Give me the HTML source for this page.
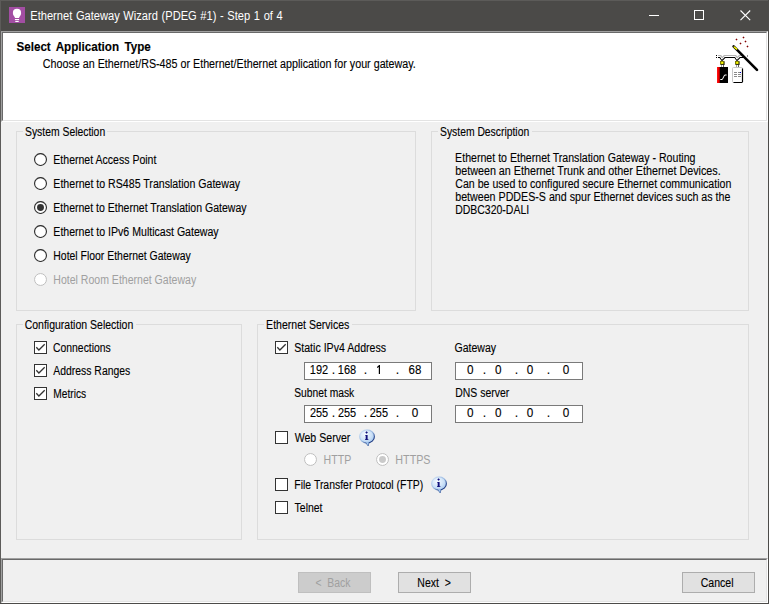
<!DOCTYPE html>
<html><head><meta charset="utf-8"><title>Ethernet Gateway Wizard</title>
<style>
html,body{margin:0;padding:0}
body{width:769px;height:604px;overflow:hidden;position:relative;background:#f0f0f0;font-family:"Liberation Sans",sans-serif;font-size:11px;color:#000}
div,span,svg{position:absolute;box-sizing:border-box}
.t{white-space:pre;font-size:12.3px;line-height:14px;transform-origin:0 0;color:#000;-webkit-text-stroke:0.12px currentColor}
#title{left:0;top:0;width:769px;height:31px;background:#4b4a48}
#bl{left:0;top:0;width:1px;height:604px;background:#5c5b59}
#br{left:768px;top:0;width:1px;height:604px;background:#4c4b49}
#bb{left:0;top:603px;width:769px;height:1px;background:#4c4b49}
#bt{left:0;top:0;width:769px;height:1px;background:#5c5b59}
.sunk{border:1px solid;border-color:#a0a0a0 #ffffff #ffffff #a0a0a0}
.sunk>i{position:absolute;left:0;top:0;right:0;bottom:0;border:1px solid;border-color:#696969 #e3e3e3 #e3e3e3 #696969}
#hdr{left:1px;top:31px;width:767px;height:91px}
#hdr>i{background:#fff}
#ftr{left:1px;top:558px;width:767px;height:45px}
#ftr>i{background:#f0f0f0}
.gb{border:1px solid #dcdcdc}
.gl{background:#f0f0f0;height:3px}
.cb{width:13px;height:13px;border:1px solid #333;background:#fff}
.rb{width:13px;height:13px;border:1px solid #333;background:#fff;border-radius:50%}
.rb.on::after{content:"";position:absolute;left:2px;top:2px;width:7px;height:7px;border-radius:50%;background:#333}
.rb.dis{border-color:#bfbfbf;background:#fff}
.rb.dis.on::after{background:#cacaca}
.ip{width:128px;height:18px;border:1px solid #7a7a7a;background:#fff}
.btn{width:73px;height:21px;border:1px solid #adadad;background:#e1e1e1}
.btn.dis{border-color:#bfbfbf;background:#cccccc}

</style></head>
<body>
<div id="title"></div>
<!-- app icon -->
<svg style="left:9px;top:7px" width="16" height="16" viewBox="0 0 16 16">
<rect width="16" height="16" fill="#a24ea3"/>
<circle cx="8" cy="5.9" r="4.1" fill="#fff"/>
<path d="M4.9 8.2 L11.1 8.2 L10 11.1 L6 11.1 Z" fill="#fff"/>
<rect x="5.9" y="12" width="4.2" height="1.1" fill="#fff"/>
<rect x="6.3" y="13.9" width="3.4" height="1.1" fill="#fff"/>
</svg>
<!-- caption buttons -->
<svg style="left:640px;top:0" width="128" height="31" viewBox="640 0 128 31" shape-rendering="crispEdges">
<rect x="649" y="15" width="10" height="1" fill="#fff"/>
<rect x="694.5" y="10.5" width="9" height="9" fill="none" stroke="#fff" stroke-width="1"/>
<path d="M740.5 10.5 L750.2 20.2 M750.2 10.5 L740.5 20.2" stroke="#fff" stroke-width="1.1" fill="none" shape-rendering="geometricPrecision"/>
</svg>
<div id="hdr" class="sunk"><i></i></div>
<div id="ftr" class="sunk"><i></i></div>
<!-- group boxes -->
<div class="gb" style="left:16px;top:131px;width:400px;height:180px"></div>
<div class="gl" style="left:23px;top:130px;width:84px"></div>
<div class="gb" style="left:431px;top:131px;width:318px;height:180px"></div>
<div class="gl" style="left:438px;top:130px;width:94px"></div>
<div class="gb" style="left:16px;top:324px;width:226px;height:216px"></div>
<div class="gl" style="left:23px;top:323px;width:113px"></div>
<div class="gb" style="left:257px;top:324px;width:492px;height:216px"></div>
<div class="gl" style="left:264px;top:323px;width:88px"></div>
<!-- radios -->
<svg style="left:34px;top:153px" width="13" height="13" viewBox="0 0 13 13"><circle cx="6.5" cy="6.5" r="5.95" fill="#fff" stroke="#333" stroke-width="1.15"/></svg>
<svg style="left:34px;top:177px" width="13" height="13" viewBox="0 0 13 13"><circle cx="6.5" cy="6.5" r="5.95" fill="#fff" stroke="#333" stroke-width="1.15"/></svg>
<svg style="left:34px;top:201px" width="13" height="13" viewBox="0 0 13 13"><circle cx="6.5" cy="6.5" r="5.95" fill="#fff" stroke="#333" stroke-width="1.15"/><circle cx="6.5" cy="6.5" r="3.45" fill="#333"/></svg>
<svg style="left:34px;top:225px" width="13" height="13" viewBox="0 0 13 13"><circle cx="6.5" cy="6.5" r="5.95" fill="#fff" stroke="#333" stroke-width="1.15"/></svg>
<svg style="left:34px;top:249px" width="13" height="13" viewBox="0 0 13 13"><circle cx="6.5" cy="6.5" r="5.95" fill="#fff" stroke="#333" stroke-width="1.15"/></svg>
<svg style="left:34px;top:273px" width="13" height="13" viewBox="0 0 13 13"><circle cx="6.5" cy="6.5" r="5.95" fill="#fff" stroke="#bfbfbf" stroke-width="1"/></svg>
<!-- checkboxes -->
<div class="cb" style="left:34px;top:341px"><svg width="11" height="11" viewBox="1 1 11 11" style="left:0;top:0"><path d="M2.3 6.3 L4.9 9 L10.7 3.3" fill="none" stroke="#333" stroke-width="1.3"/></svg></div>
<div class="cb" style="left:34px;top:364px"><svg width="11" height="11" viewBox="1 1 11 11" style="left:0;top:0"><path d="M2.3 6.3 L4.9 9 L10.7 3.3" fill="none" stroke="#333" stroke-width="1.3"/></svg></div>
<div class="cb" style="left:34px;top:387px"><svg width="11" height="11" viewBox="1 1 11 11" style="left:0;top:0"><path d="M2.3 6.3 L4.9 9 L10.7 3.3" fill="none" stroke="#333" stroke-width="1.3"/></svg></div>
<div class="cb" style="left:275px;top:341px"><svg width="11" height="11" viewBox="1 1 11 11" style="left:0;top:0"><path d="M2.3 6.3 L4.9 9 L10.7 3.3" fill="none" stroke="#333" stroke-width="1.3"/></svg></div>
<div class="cb" style="left:275px;top:431px"></div>
<div class="cb" style="left:275px;top:478px"></div>
<div class="cb" style="left:275px;top:501px"></div>
<!-- ip boxes -->
<div class="ip" style="left:304px;top:362px"></div>
<div class="ip" style="left:304px;top:405px"></div>
<div class="ip" style="left:455px;top:362px"></div>
<div class="ip" style="left:455px;top:405px"></div>
<!-- disabled radios -->
<svg style="left:304px;top:453px" width="13" height="13" viewBox="0 0 13 13"><circle cx="6.5" cy="6.5" r="5.95" fill="#fff" stroke="#bfbfbf" stroke-width="1"/></svg>
<svg style="left:376px;top:453px" width="13" height="13" viewBox="0 0 13 13"><circle cx="6.5" cy="6.5" r="5.95" fill="#fff" stroke="#bfbfbf" stroke-width="1"/><circle cx="6.5" cy="6.5" r="3.45" fill="#cacaca"/></svg>
<!-- buttons -->
<div class="btn dis" style="left:298px;top:572px"></div>
<div class="btn" style="left:398px;top:572px"></div>
<div class="btn" style="left:682px;top:572px"></div>
<div id="bt"></div><div id="bl"></div><div id="br"></div><div id="bb"></div>
<!-- wizard icon -->
<svg style="left:712px;top:32px" width="50" height="54" viewBox="712 32 50 54">
<g shape-rendering="crispEdges">
<g fill="#800000"><rect x="736" y="39" width="1" height="1"/><rect x="743" y="37" width="1" height="1"/><rect x="745" y="41" width="1" height="1"/><rect x="740" y="43" width="1" height="1"/><rect x="747" y="46" width="1" height="1"/></g>
<g fill="#800000" opacity="0.3"><path d="M735 39h3v1h-3zM736 38h1v3h-1zM742 37h3v1h-3zM743 36h1v3h-1zM744 41h3v1h-3zM745 40h1v3h-1zM739 43h3v1h-3zM740 42h1v3h-1zM746 46h3v1h-3zM747 45h1v3h-1z"/></g>
<!-- cable -->
<rect x="716" y="55" width="1" height="1" fill="#000"/><rect x="716" y="57" width="1" height="1" fill="#000"/>
<rect x="747" y="55" width="1" height="2" fill="#909090"/>
</g>
<g fill="none" stroke-linejoin="miter" stroke-linecap="butt">
<path d="M718 56.5 H720.3 L722 59.3 L724.6 56.5 H735.3 L737 59.3 L739.6 56.5 H744" stroke="#b4b4b4" stroke-width="3"/>
<path d="M718 57.5 H720 L722 60.3 L724.9 57.5 H735 L737 60.3 L739.9 57.5 H744" stroke="#000" stroke-width="1.1"/>
<path d="M718 56.5 H720.3 L722 59.3 L724.6 56.5 H735.3 L737 59.3 L739.6 56.5 H744" stroke="#fff" stroke-width="1"/>
<path d="M721.5 59.5 V61 M722.6 59.5 V61 M736.5 59.5 V61 M737.6 59.5 V61" stroke="#444" stroke-width="0.6"/>
</g>
<rect x="720" y="61" width="4.4" height="3.6" fill="#7c7c00"/><rect x="720.6" y="64" width="3.8" height="0.7" fill="#000"/><rect x="723.8" y="61.4" width="0.6" height="3.2" fill="#000"/><rect x="721.2" y="61.9" width="2" height="1.9" fill="#ffff00"/>
<rect x="735" y="61" width="4.4" height="3.6" fill="#7c7c00"/><rect x="735.6" y="64" width="3.8" height="0.7" fill="#000"/><rect x="738.8" y="61.4" width="0.6" height="3.2" fill="#000"/><rect x="736.2" y="61.9" width="2" height="1.9" fill="#ffff00"/>
<g shape-rendering="crispEdges">
<rect x="721" y="65" width="1" height="2" fill="#a0a0a0"/><rect x="723" y="65" width="1" height="2" fill="#606060"/>
<rect x="736" y="65" width="1" height="2" fill="#a0a0a0"/><rect x="738" y="65" width="1" height="2" fill="#606060"/>
<rect x="717" y="67" width="11" height="16" fill="#000"/>
<rect x="717" y="67" width="1" height="16" fill="#ff1010"/><rect x="718" y="67" width="1" height="16" fill="#f00000"/><rect x="719" y="67" width="1" height="16" fill="#a00000"/>
</g>
<rect x="732.5" y="67.5" width="10" height="15" rx="1" fill="#fff" stroke="#c8c8c8" stroke-width="1"/>
<path d="M742.5 68.5 V82 M733.5 82.5 H742.5" stroke="#000" stroke-width="1.2" fill="none"/>
<g shape-rendering="crispEdges" fill="#8a8a8a"><rect x="734" y="72" width="3" height="1"/><rect x="738" y="72" width="2" height="1"/><rect x="734" y="74" width="3" height="1"/><rect x="738" y="74" width="3" height="1"/><rect x="734" y="76" width="3" height="1"/><rect x="738" y="76" width="3" height="1"/>
<rect x="740" y="72" width="1" height="1" fill="#0000c0"/></g>
<path d="M720.3 79.5 H722.3 L724.6 75 H726.6" fill="none" stroke="#fff" stroke-width="1"/>
<path d="M733.6 46.4 L757 69.8" stroke="#000" stroke-width="2.6" stroke-linecap="round" fill="none"/>
<path d="M734.2 47 L736.7 49.1" stroke="#ffff00" stroke-width="1.4" stroke-linecap="round" fill="none"/>
</svg>
<!-- info icons -->
<svg width="0" height="0" style="left:0;top:0"><defs>
<radialGradient id="ig" cx="0.38" cy="0.35" r="0.75"><stop offset="0" stop-color="#f4faff"/><stop offset="0.55" stop-color="#cfe3f8"/><stop offset="1" stop-color="#9fc4ee"/></radialGradient>
<linearGradient id="is" x1="0" y1="0" x2="1" y2="1"><stop offset="0" stop-color="#dce9f8"/><stop offset="0.5" stop-color="#9dbbe2"/><stop offset="0.8" stop-color="#2a468c"/><stop offset="1" stop-color="#16306e"/></linearGradient>
</defs></svg>
<svg style="left:358px;top:428px" width="18" height="20" viewBox="0 0 18 20">
<path d="M7.2 14.0 L10.2 17.9 L11.2 13.6 Z" fill="#8fbbea" stroke="#2c4c92" stroke-width="0.7"/>
<ellipse cx="9" cy="8.5" rx="7.4" ry="6.6" fill="url(#ig)" stroke="url(#is)" stroke-width="1.2"/>
<path d="M7.8 14.4 L10.1 16.9 L10.7 14.0 Z" fill="#a9cdf2"/>
<path d="M8.6 3.2 L9.9 4.5 L8.6 5.8 L7.3 4.5 Z" fill="#10107c"/>
<path d="M7.2 6.9 H9.6 V11.3 H10.4 V12.1 H7.0 V11.3 H7.7 V7.7 H7.2 Z" fill="#10107c"/>
</svg>
<svg style="left:430px;top:475px" width="18" height="20" viewBox="0 0 18 20">
<path d="M7.2 14.0 L10.2 17.9 L11.2 13.6 Z" fill="#8fbbea" stroke="#2c4c92" stroke-width="0.7"/>
<ellipse cx="9" cy="8.5" rx="7.4" ry="6.6" fill="url(#ig)" stroke="url(#is)" stroke-width="1.2"/>
<path d="M7.8 14.4 L10.1 16.9 L10.7 14.0 Z" fill="#a9cdf2"/>
<path d="M8.6 3.2 L9.9 4.5 L8.6 5.8 L7.3 4.5 Z" fill="#10107c"/>
<path d="M7.2 6.9 H9.6 V11.3 H10.4 V12.1 H7.0 V11.3 H7.7 V7.7 H7.2 Z" fill="#10107c"/>
</svg>
<!-- digit 1 in IP field (drawn, no foot serif) -->
<svg style="left:375px;top:363px" width="8" height="13" viewBox="375 363 8 13"><path d="M376.9 367.1 L378.7 365.5 L378.8 365 L380.0 365 L380.0 374 L378.8 374 L378.8 366.9 L377.3 368.0 Z" fill="#000"/></svg>

<!-- text -->
<span class="t" style="left:30px;top:9px;transform:translate(0.28px,0.00px) scaleX(0.9253);font-size:12px;color:#ffffff;word-spacing:0.6px;-webkit-text-stroke:0;">Ethernet Gateway Wizard (PDEG #1) - Step 1 of 4</span>
<span class="t" style="left:16px;top:40px;transform:translate(0.41px,0.00px) scaleX(0.9476);font-weight:700;word-spacing:2.2px;">Select Application Type</span>
<span class="t" style="left:42px;top:57px;transform:translate(0.77px,0.00px) scaleX(0.8722);">Choose an Ethernet/RS-485 or Ethernet/Ethernet application for your gateway.</span>
<span class="t" style="left:25px;top:125px;transform:translate(0.00px,0.00px) scaleX(0.8438);">System Selection</span>
<span class="t" style="left:53px;top:153px;transform:translate(0.32px,0.00px) scaleX(0.8569);">Ethernet Access Point</span>
<span class="t" style="left:53px;top:177px;transform:translate(0.32px,0.00px) scaleX(0.8620);">Ethernet to RS485 Translation Gateway</span>
<span class="t" style="left:53px;top:201px;transform:translate(0.32px,0.00px) scaleX(0.8564);">Ethernet to Ethernet Translation Gateway</span>
<span class="t" style="left:53px;top:225px;transform:translate(0.32px,0.00px) scaleX(0.8609);">Ethernet to IPv6 Multicast Gateway</span>
<span class="t" style="left:53px;top:249px;transform:translate(0.33px,0.00px) scaleX(0.8480);">Hotel Floor Ethernet Gateway</span>
<span class="t" style="left:53px;top:273px;transform:translate(0.32px,0.00px) scaleX(0.8565);color:#a0a0a0;-webkit-text-stroke:0;">Hotel Room Ethernet Gateway</span>
<span class="t" style="left:440px;top:125px;transform:translate(0.00px,0.00px) scaleX(0.8418);">System Description</span>
<span class="t" style="left:455px;top:151px;transform:translate(0.12px,0.00px) scaleX(0.8618);">Ethernet to Ethernet Translation Gateway - Routing</span>
<span class="t" style="left:455px;top:164px;transform:translate(0.21px,0.00px) scaleX(0.8748);">between an Ethernet Trunk and other Ethernet Devices.</span>
<span class="t" style="left:455px;top:177px;transform:translate(0.33px,0.00px) scaleX(0.8607);">Can be used to configured secure Ethernet communication</span>
<span class="t" style="left:455px;top:190px;transform:translate(0.21px,0.00px) scaleX(0.8678);">between PDDES-S and spur Ethernet devices such as the</span>
<span class="t" style="left:455px;top:203px;transform:translate(0.13px,0.00px) scaleX(0.8528);">DDBC320-DALI</span>
<span class="t" style="left:24px;top:318px;transform:translate(0.63px,0.00px) scaleX(0.8546);">Configuration Selection</span>
<span class="t" style="left:53px;top:341px;transform:translate(0.04px,0.00px) scaleX(0.8443);">Connections</span>
<span class="t" style="left:53px;top:364px;transform:translate(0.32px,0.00px) scaleX(0.8460);">Address Ranges</span>
<span class="t" style="left:53px;top:387px;transform:translate(0.35px,0.00px) scaleX(0.8279);">Metrics</span>
<span class="t" style="left:266px;top:318px;transform:translate(0.12px,0.00px) scaleX(0.8568);">Ethernet Services</span>
<span class="t" style="left:294px;top:341px;transform:translate(0.19px,0.00px) scaleX(0.8617);">Static IPv4 Address</span>
<span class="t" style="left:454px;top:341px;transform:translate(0.43px,0.00px) scaleX(0.8577);">Gateway</span>
<span class="t" style="left:294px;top:386px;transform:translate(0.21px,0.00px) scaleX(0.8365);">Subnet mask</span>
<span class="t" style="left:455px;top:386px;transform:translate(0.23px,0.00px) scaleX(0.8495);">DNS server</span>
<span class="t" style="left:294px;top:431px;transform:translate(0.64px,0.00px) scaleX(0.8617);">Web Server</span>
<span class="t" style="left:323px;top:453px;transform:translate(0.57px,0.00px) scaleX(0.8603);color:#a0a0a0;-webkit-text-stroke:0;">HTTP</span>
<span class="t" style="left:395px;top:453px;transform:translate(0.31px,0.00px) scaleX(0.8735);color:#a0a0a0;-webkit-text-stroke:0;">HTTPS</span>
<span class="t" style="left:294px;top:478px;transform:translate(0.33px,0.00px) scaleX(0.8499);">File Transfer Protocol (FTP)</span>
<span class="t" style="left:294px;top:501px;transform:translate(0.61px,0.00px) scaleX(0.8504);">Telnet</span>
<span class="t" style="left:315px;top:575px;transform:translate(0.47px,0.50px) scaleX(0.8460);color:#a0a0a0;-webkit-text-stroke:0;">&lt;  Back</span>
<span class="t" style="left:417px;top:575px;transform:translate(0.33px,0.50px) scaleX(0.8548);">Next  &gt;</span>
<span class="t" style="left:700px;top:575px;transform:translate(0.73px,0.50px) scaleX(0.8571);">Cancel</span>
<span class="t" style="left:309px;top:363px;transform:translate(0.79px,0.00px) scaleX(0.8965);">192</span>
<span class="t" style="left:337px;top:363px;transform:translate(0.79px,0.00px) scaleX(0.8952);">168</span>
<span class="t" style="left:408px;top:363px;transform:translate(0.53px,0.00px) scaleX(0.9350);">68</span>
<span class="t" style="left:331px;top:363px;transform:translate(0.85px,0.00px) scaleX(1.0000);">.</span>
<span class="t" style="left:363px;top:363px;transform:translate(0.85px,0.00px) scaleX(1.0000);">.</span>
<span class="t" style="left:395px;top:363px;transform:translate(0.65px,0.00px) scaleX(1.0000);">.</span>
<span class="t" style="left:309px;top:406px;transform:translate(0.97px,0.00px) scaleX(0.8864);">255</span>
<span class="t" style="left:337px;top:406px;transform:translate(0.97px,0.00px) scaleX(0.8864);">255</span>
<span class="t" style="left:369px;top:406px;transform:translate(0.77px,0.00px) scaleX(0.8864);">255</span>
<span class="t" style="left:411px;top:406px;transform:translate(0.69px,0.00px) scaleX(0.9520);">0</span>
<span class="t" style="left:331px;top:406px;transform:translate(0.85px,0.00px) scaleX(1.0000);">.</span>
<span class="t" style="left:363px;top:406px;transform:translate(0.85px,0.00px) scaleX(1.0000);">.</span>
<span class="t" style="left:395px;top:406px;transform:translate(0.65px,0.00px) scaleX(1.0000);">.</span>
<span class="t" style="left:466px;top:363px;transform:translate(0.89px,0.00px) scaleX(0.9520);">0</span>
<span class="t" style="left:494px;top:363px;transform:translate(0.89px,0.00px) scaleX(0.9520);">0</span>
<span class="t" style="left:526px;top:363px;transform:translate(0.69px,0.00px) scaleX(0.9520);">0</span>
<span class="t" style="left:562px;top:363px;transform:translate(0.69px,0.00px) scaleX(0.9520);">0</span>
<span class="t" style="left:482px;top:363px;transform:translate(0.85px,0.00px) scaleX(1.0000);">.</span>
<span class="t" style="left:514px;top:363px;transform:translate(0.85px,0.00px) scaleX(1.0000);">.</span>
<span class="t" style="left:546px;top:363px;transform:translate(0.65px,0.00px) scaleX(1.0000);">.</span>
<span class="t" style="left:466px;top:406px;transform:translate(0.89px,0.00px) scaleX(0.9520);">0</span>
<span class="t" style="left:494px;top:406px;transform:translate(0.89px,0.00px) scaleX(0.9520);">0</span>
<span class="t" style="left:526px;top:406px;transform:translate(0.69px,0.00px) scaleX(0.9520);">0</span>
<span class="t" style="left:562px;top:406px;transform:translate(0.69px,0.00px) scaleX(0.9520);">0</span>
<span class="t" style="left:482px;top:406px;transform:translate(0.85px,0.00px) scaleX(1.0000);">.</span>
<span class="t" style="left:514px;top:406px;transform:translate(0.85px,0.00px) scaleX(1.0000);">.</span>
<span class="t" style="left:546px;top:406px;transform:translate(0.65px,0.00px) scaleX(1.0000);">.</span>
</body></html>
